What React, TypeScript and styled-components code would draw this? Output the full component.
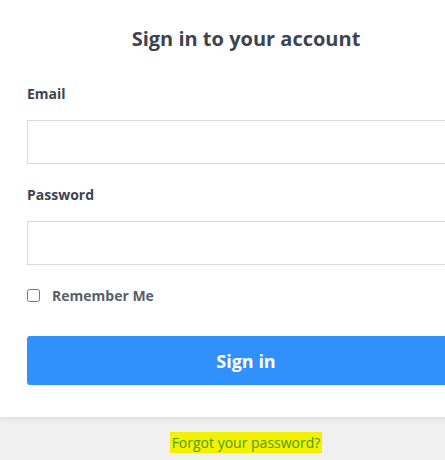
import React from "react";
import styled, { createGlobalStyle } from "styled-components";

const Global = createGlobalStyle`
  html, body { margin: 0; padding: 0; background: #f0f0f0; overflow: hidden; }
  body { font-family: "Open Sans", "Liberation Sans", sans-serif; }
  * { box-sizing: border-box; }
`;

const Page = styled.div`
  width: 492px;
  min-height: 460px;
  background: #f0f0f0;
`;

const Card = styled.div`
  background: #ffffff;
  padding: 25px 27px 32px;
  box-shadow: 0 2px 5px rgba(0, 0, 0, 0.08);
`;

const Title = styled.h1`
  margin: 0 0 31px;
  text-align: center;
  font-size: 20px;
  line-height: 28px;
  font-weight: 700;
  color: #3d4451;
`;

const Field = styled.div`
  display: flex;
  flex-direction: column;
  margin-bottom: 21px;
`;

const Label = styled.label`
  font-size: 14px;
  line-height: 20px;
  font-weight: 700;
  color: #3d4451;
  margin-bottom: 16px;
`;

const Input = styled.input`
  height: 44px;
  border: 1px solid #d9d9d9;
  border-radius: 0;
  background: #fff;
  padding: 0 12px;
  font-size: 14px;
  outline: none;
`;

const CheckRow = styled.label`
  display: flex;
  align-items: center;
  gap: 12px;
  margin-top: 3px;
  font-size: 14px;
  line-height: 20px;
  font-weight: 700;
  color: #595f69;
`;

const Check = styled.input`
  width: 13px;
  height: 13px;
  margin: 0 0 2px 0;
`;

const Button = styled.button`
  display: block;
  width: 100%;
  height: 49px;
  margin-top: 30px;
  border: none;
  border-radius: 3px;
  background: #3091fc;
  color: #ffffff;
  font-family: "Open Sans", "Liberation Sans", sans-serif;
  font-size: 18px;
  font-weight: 700;
  cursor: pointer;
`;

const Footer = styled.div`
  text-align: center;
  padding-top: 14px;
`;

const ForgotLink = styled.a`
  display: inline-block;
  background: #f2f200;
  color: #4f9a12;
  font-size: 14px;
  line-height: 21px;
  text-decoration: none;
  padding: 0 2px;
`;

export default function App() {
  return (
    <>
      <Global />
      <Page>
        <Card>
          <Title>Sign in to your account</Title>
          <Field>
            <Label htmlFor="email">Email</Label>
            <Input id="email" type="email" />
          </Field>
          <Field>
            <Label htmlFor="password">Password</Label>
            <Input id="password" type="password" />
          </Field>
          <CheckRow>
            <Check type="checkbox" />
            Remember Me
          </CheckRow>
          <Button type="button">Sign in</Button>
        </Card>
        <Footer>
          <ForgotLink href="#">Forgot your password?</ForgotLink>
        </Footer>
      </Page>
    </>
  );
}
